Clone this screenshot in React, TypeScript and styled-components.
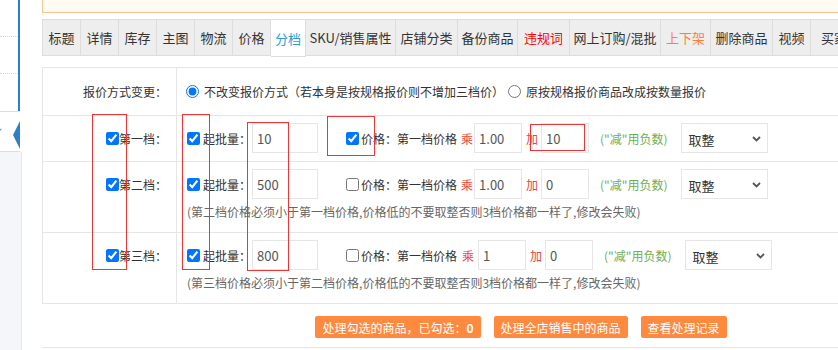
import React from 'react';
import styled, { createGlobalStyle } from 'styled-components';

interface TabItem {
  label: string;
  width: number;
  tone?: 'red' | 'orange';
  active?: boolean;
}

interface Tier {
  name: string;
  qty: string;
  priceOn: boolean;
  mul: string;
  add: string;
  note?: string;
  wideMul?: boolean;
}

const tabs: TabItem[] = [
  { label: '标题', width: 38 },
  { label: '详情', width: 38 },
  { label: '库存', width: 38 },
  { label: '主图', width: 38 },
  { label: '物流', width: 38 },
  { label: '价格', width: 38 },
  { label: '分档', width: 35, active: true },
  { label: 'SKU/销售属性', width: 90 },
  { label: '店铺分类', width: 62 },
  { label: '备份商品', width: 60 },
  { label: '违规词', width: 52, tone: 'red' },
  { label: '网上订购/混批', width: 91 },
  { label: '上下架', width: 50, tone: 'orange' },
  { label: '删除商品', width: 62 },
  { label: '视频', width: 38 },
  { label: '买家秀', width: 60 },
];

const tiers: Tier[] = [
  { name: '第一档', qty: '10', priceOn: true, mul: '1.00', add: '10' },
  {
    name: '第二档',
    qty: '500',
    priceOn: false,
    mul: '1.00',
    add: '0',
    note: '(第二档价格必须小于第一档价格,价格低的不要取整否则3档价格都一样了,修改会失败)',
  },
  {
    name: '第三档',
    qty: '800',
    priceOn: false,
    mul: '1',
    add: '0',
    wideMul: true,
    note: '(第三档价格必须小于第二档价格,价格低的不要取整否则3档价格都一样了,修改会失败)',
  },
];

// red boxes drawn over the screenshot
const marks = [
  { x: 92, y: 114, w: 35, h: 156 },
  { x: 182, y: 114, w: 28, h: 156 },
  { x: 247, y: 122, w: 42, h: 149 },
  { x: 327, y: 116, w: 48, h: 40 },
  { x: 530, y: 124, w: 55, h: 27 },
];

const GlobalStyle = createGlobalStyle`
  html, body {
    margin: 0;
    padding: 0;
    overflow: hidden;
    background: #fff;
  }
  body {
    font-family: "Noto Sans CJK SC", "Liberation Sans", sans-serif;
    font-size: 12px;
    color: #333;
  }
  * {
    box-sizing: border-box;
  }
`;

const Page = styled.div`
  position: relative;
  display: flex;
  width: 838px;
  height: 350px;
  overflow: hidden;
`;

const Sidebar = styled.div`
  width: 22px;
  flex-shrink: 0;
  display: flex;
  flex-direction: column;
`;

const SideTop = styled.div`
  width: 22px;
  height: 152px;
  background: #fff;
`;

const SideNav = styled.div`
  width: 20px;
  height: 152px;
  border-right: 2px solid #2f7fc5;
  display: flex;
  flex-direction: column;
`;

const SideItem = styled.div<{ $dotted?: boolean }>`
  height: 37px;
  width: 18px;
  border-bottom: ${(p) => (p.$dotted ? '1px dotted #d6d6d6' : 'none')};
`;

const SideActive = styled.div`
  position: relative;
  height: 41px;
  width: 20px;
  margin-right: -2px;
  border-top: 1px solid #ddd;
  border-bottom: 1px solid #ddd;
  background: #fff;
  display: flex;
  align-items: center;
  overflow: hidden;

  .tick {
    margin-left: -6px;
    color: #4a78c0;
    font-size: 11px;
  }
`;

const SideArrow = styled.div`
  position: absolute;
  right: 0;
  top: 9px;
  width: 0;
  height: 0;
  border-top: 14px solid transparent;
  border-bottom: 14px solid transparent;
  border-right: 7px solid #2f7fc5;
`;

const SideRest = styled.div`
  flex: 1;
  background: #f5f6fa;
  border-right: 1px solid #e6e7ea;
`;

const Main = styled.div`
  flex: 1;
  padding-left: 20px;
  background: #fff;
  overflow: hidden;
`;

const Content = styled.div`
  width: 958px;
`;

const Notice = styled.div`
  height: 13px;
  border: 1px solid #f2c68c;
  border-top: none;
  background: #fffbf3;
  margin-bottom: 6px;
`;

const TabBar = styled.div`
  display: flex;
  height: 37px;
  border: 1px solid #ddd;
  background: #eee;
`;

const Tab = styled.div<{ $w: number; $tone?: string; $active?: boolean }>`
  width: ${(p) => p.$w}px;
  flex-shrink: 0;
  height: ${(p) => (p.$active ? 37 : 35)}px;
  display: flex;
  align-items: center;
  justify-content: center;
  border-right: 1px solid #ddd;
  border-bottom: ${(p) => (p.$active ? '1px solid #ddd' : 'none')};
  background: ${(p) => (p.$active ? '#fff' : 'transparent')};
  font-size: 13px;
  white-space: nowrap;
  position: relative;
  z-index: ${(p) => (p.$active ? 1 : 0)};
  color: ${(p) =>
    p.$active
      ? '#2d9bd6'
      : p.$tone === 'red'
        ? '#ff0000'
        : p.$tone === 'orange'
          ? '#ff7e3b'
          : '#333'};
`;

const Table = styled.div`
  margin-top: 11px;
  border: 1px solid #e6e6e6;
  border-top: none;
`;

const Row = styled.div`
  display: grid;
  grid-template-columns: 134px 1fr;
  border-top: 1px solid #e6e6e6;
`;

const LabelCell = styled.div<{ $top?: boolean }>`
  border-right: 1px solid #e6e6e6;
  display: flex;
  justify-content: flex-end;
  align-items: ${(p) => (p.$top ? 'flex-start' : 'center')};
  padding: ${(p) => (p.$top ? '7px 9px 0 0' : '0 9px 0 0')};
  color: #333;
`;

const LabelLine = styled.div`
  height: 30px;
  display: flex;
  align-items: center;
`;

const Cell = styled.div<{ $note?: boolean }>`
  padding: ${(p) => (p.$note ? '7px 10px 11px' : '7px 10px 8px')};
`;

const ModeCell = styled.div`
  height: 47px;
  padding-left: 9px;
  display: flex;
  align-items: center;
  white-space: nowrap;
`;

const Radio = styled.input.attrs({ type: 'radio' })<{ $gap?: number }>`
  width: 13px;
  height: 13px;
  margin: 0 5px 0 ${(p) => p.$gap ?? 0}px;
`;

const Check = styled.input.attrs({ type: 'checkbox' })<{ $gap?: number; $tight?: boolean }>`
  width: 13px;
  height: 13px;
  margin: 0 ${(p) => (p.$tight ? 0 : 2)}px 0 ${(p) => p.$gap ?? 0}px;
  flex-shrink: 0;
`;

const Line = styled.div`
  height: 30px;
  display: flex;
  align-items: center;
  white-space: nowrap;
`;

const Text = styled.span<{ $gap?: number }>`
  margin-left: ${(p) => p.$gap ?? 0}px;
`;

const Op = styled.span<{ $gap?: number; $after?: number }>`
  color: #e8453c;
  margin-left: ${(p) => p.$gap ?? 4}px;
  margin-right: ${(p) => p.$after ?? 1}px;
`;

const Field = styled.input<{ $w: number; $gap?: number }>`
  width: ${(p) => p.$w}px;
  height: 30px;
  margin-left: ${(p) => p.$gap ?? 0}px;
  border: 1px solid #e6e6e6;
  padding: 0 4px;
  font-family: inherit;
  font-size: 13px;
  color: #555;
  outline: none;
`;

const Hint = styled.span`
  color: #6fae52;
  margin-left: 11px;
`;

const Dropdown = styled.div`
  margin-left: 13px;
  width: 87px;
  height: 30px;
  border: 1px solid #e6e6e6;
  background: #fff;
  display: flex;
  align-items: center;
  justify-content: space-between;
  padding: 2px 6px 0 7px;
  font-size: 13px;
  color: #333;
  cursor: pointer;
`;

const Note = styled.div`
  margin-top: 4px;
  line-height: 18px;
  color: #666;
  white-space: nowrap;
`;

const Actions = styled.div`
  margin-top: 12px;
  display: flex;
  justify-content: center;
  gap: 13px;
`;

const ActionButton = styled.button`
  height: 22px;
  padding: 0 7px;
  border: none;
  border-radius: 2px;
  background: #ff8a3f;
  color: #fff;
  font-family: inherit;
  font-size: 12px;
  white-space: nowrap;

  b {
    font-weight: 700;
  }
`;

const Divider = styled.div`
  margin-top: 9px;
  border-top: 1px solid #e6e6e6;
`;

const Mark = styled.div<{ $x: number; $y: number; $w: number; $h: number }>`
  position: absolute;
  left: ${(p) => p.$x}px;
  top: ${(p) => p.$y}px;
  width: ${(p) => p.$w}px;
  height: ${(p) => p.$h}px;
  border: 1px solid #ee3535;
  pointer-events: none;
`;

const App: React.FC = () => {
  return (
    <Page>
      <GlobalStyle />
      <Sidebar>
        <SideTop>
          <SideNav>
            <SideItem $dotted />
            <SideItem $dotted />
            <SideItem />
            <SideActive>
              <span className="tick">✓</span>
              <SideArrow />
            </SideActive>
          </SideNav>
        </SideTop>
        <SideRest />
      </Sidebar>

      <Main>
        <Content>
          <Notice />
          <TabBar>
            {tabs.map((t) => (
              <Tab key={t.label} $w={t.width} $tone={t.tone} $active={t.active}>
                {t.label}
              </Tab>
            ))}
          </TabBar>

          <Table>
            <Row>
              <LabelCell>报价方式变更：</LabelCell>
              <ModeCell>
                <Radio name="mode" defaultChecked />
                不改变报价方式（若本身是按规格报价则不增加三档价）
                <Radio name="mode" $gap={4} />
                原按规格报价商品改成按数量报价
              </ModeCell>
            </Row>

            {tiers.map((tier) => (
              <Row key={tier.name}>
                <LabelCell $top>
                  <LabelLine>
                    <Check defaultChecked $tight />
                    {tier.name}：
                  </LabelLine>
                </LabelCell>
                <Cell $note={!!tier.note}>
                  <Line>
                    <Check defaultChecked />
                    <Text $gap={1}>起批量：</Text>
                    <Field $w={66} $gap={1} defaultValue={tier.qty} />
                    <Check defaultChecked={tier.priceOn} $gap={28} />
                    <Text>价格：第一档价格</Text>
                    <Op $gap={tier.wideMul ? 5 : 4} $after={tier.wideMul ? 4 : 1}>
                      乘
                    </Op>
                    <Field $w={48} defaultValue={tier.mul} />
                    <Op $after={3}>加</Op>
                    <Field $w={48} defaultValue={tier.add} />
                    <Hint>("减"用负数)</Hint>
                    <Dropdown role="combobox">
                      <span>取整</span>
                      <svg width="9" height="6" viewBox="0 0 9 6">
                        <polyline
                          points="1,1 4.5,4.5 8,1"
                          fill="none"
                          stroke="#555"
                          strokeWidth="1.8"
                        />
                      </svg>
                    </Dropdown>
                  </Line>
                  {tier.note && <Note>{tier.note}</Note>}
                </Cell>
              </Row>
            ))}
          </Table>

          <Actions>
            <ActionButton>
              处理勾选的商品，已勾选：<b>0</b>
            </ActionButton>
            <ActionButton>处理全店销售中的商品</ActionButton>
            <ActionButton>查看处理记录</ActionButton>
          </Actions>
          <Divider />
        </Content>
      </Main>

      {marks.map((m, i) => (
        <Mark key={i} $x={m.x} $y={m.y} $w={m.w} $h={m.h} />
      ))}
    </Page>
  );
};

export default App;
